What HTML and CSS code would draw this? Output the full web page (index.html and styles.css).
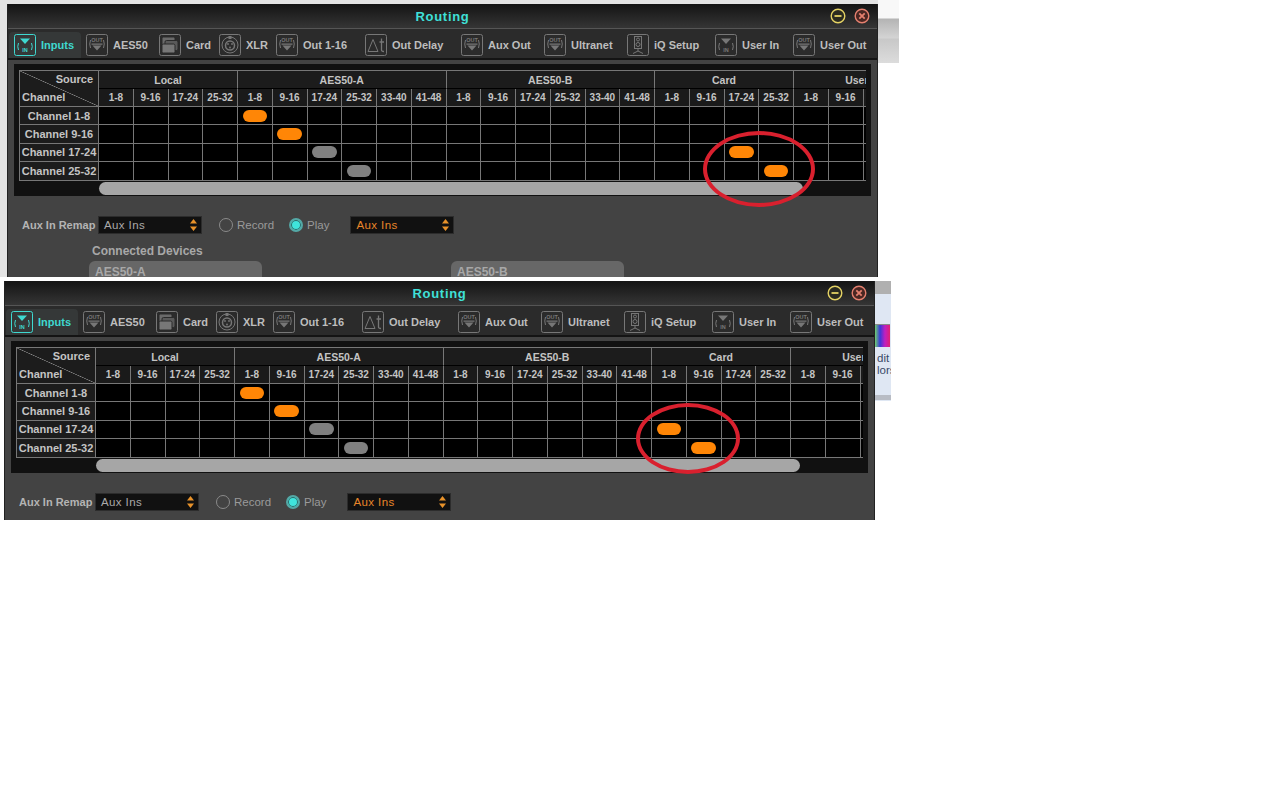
FILE: index.html
```html
<!DOCTYPE html>
<html lang="en">
<head>
    <meta charset="UTF-8">
    <title>Routing</title>
    <link rel="stylesheet" href="styles.css">
</head>
<body>
    <svg class="defs" width="0" height="0">
        <symbol id="ico-in" viewBox="0 0 22 22">
            <rect x="0.5" y="0.5" width="21" height="21" rx="2" fill="none" stroke="currentColor"/>
            <path d="M6 4.5h10l-5 5.5z" fill="currentColor"/>
            <path d="M4.500 9q-1.500 3.500 0 7M17.500 9q1.500 3.500 0 7" fill="none" stroke="currentColor"/>
            <text x="11" y="18" class="ico-text" text-anchor="middle" fill="currentColor">IN</text>
        </symbol>
        <symbol id="ico-out" viewBox="0 0 22 22">
            <rect x="0.500" y="0.500" width="21" height="21" rx="2" fill="none" stroke="currentColor"/>
            <text x="11" y="7.500" class="ico-text" text-anchor="middle" fill="currentColor">OUT</text>
            <path d="M4.500 6q-1.500 4 0 8M17.500 6q1.500 4 0 8" fill="none" stroke="currentColor"/>
            <path d="M5.500 9.500h11v1.200h-11zM6.500 11.500h9l-4.500 5z" fill="currentColor"/>
        </symbol>
        <symbol id="ico-card" viewBox="0 0 22 22">
            <rect x="0.500" y="0.500" width="21" height="21" rx="2" fill="none" stroke="currentColor"/>
            <rect x="3" y="3" width="13" height="10" rx="1.500" fill="#6a6a6a" stroke="#2a2a2a"/>
            <rect x="6" y="6.500" width="13" height="10" rx="1.500" fill="#5a5a5a" stroke="#2a2a2a"/>
            <rect x="3" y="10" width="13" height="9" rx="1.500" fill="#777" stroke="#2a2a2a"/>
        </symbol>
        <symbol id="ico-xlr" viewBox="0 0 22 22">
            <rect x="0.500" y="0.500" width="21" height="21" rx="2" fill="none" stroke="currentColor"/>
            <circle cx="11" cy="11" r="8" fill="none" stroke="currentColor"/>
            <circle cx="11" cy="11.500" r="4.500" fill="none" stroke="currentColor" stroke-width="1.500"/>
            <circle cx="9" cy="10" r="0.900" fill="currentColor"/>
            <circle cx="13" cy="10" r="0.900" fill="currentColor"/>
            <circle cx="11" cy="13.500" r="0.900" fill="currentColor"/>
            <rect x="9.500" y="2" width="3" height="3" fill="currentColor"/>
        </symbol>
        <symbol id="ico-delay" viewBox="0 0 22 22">
            <rect x="0.500" y="0.500" width="21" height="21" rx="2" fill="none" stroke="currentColor"/>
            <path d="M3 17.500l5-12 5 12z" fill="none" stroke="currentColor"/>
            <path d="M16.500 4.500v11.500q0 1.500 2.500 1.500M14.500 8h4.500" fill="none" stroke="currentColor" stroke-width="1.300"/>
        </symbol>
        <symbol id="ico-iq" viewBox="0 0 22 22">
            <rect x="0.500" y="0.500" width="21" height="21" rx="2" fill="none" stroke="currentColor"/>
            <rect x="7.500" y="2.500" width="7" height="12" fill="none" stroke="currentColor"/>
            <circle cx="11" cy="5.500" r="1.500" fill="none" stroke="currentColor"/>
            <circle cx="11" cy="10.500" r="2" fill="none" stroke="currentColor"/>
            <path d="M11 15v2M11 17l-5 2.500M11 17l5 2.500" fill="none" stroke="currentColor"/>
        </symbol>
    </svg>

    <!-- first capture -->
    <div class="shot">
        <div class="backdrop">
            <div class="window window-tall">
                <div class="titlebar">
                    <div class="title">Routing</div>
                    <div class="win-buttons">
                        <svg class="win-btn" viewBox="0 0 16 16"><circle cx="8" cy="8" r="6.800" fill="#2a2a20" stroke="#e4d264" stroke-width="1.400"/><path d="M4.500 8h7" stroke="#e4d264" stroke-width="1.800"/></svg>
                        <svg class="win-btn" viewBox="0 0 16 16"><circle cx="8" cy="8" r="6.800" fill="#4a2622" stroke="#e5806f" stroke-width="1.400"/><path d="M5.300 5.300l5.400 5.400M10.700 5.300l-5.400 5.400" stroke="#e5806f" stroke-width="1.800"/></svg>
                    </div>
                </div>
                <div class="tabs">
                    <div class="tab tab-active"><svg class="ico"><use href="#ico-in"/></svg>Inputs</div>
                    <div class="tab"><svg class="ico"><use href="#ico-out"/></svg>AES50</div>
                    <div class="tab"><svg class="ico"><use href="#ico-card"/></svg>Card</div>
                    <div class="tab"><svg class="ico"><use href="#ico-xlr"/></svg>XLR</div>
                    <div class="tab"><svg class="ico"><use href="#ico-out"/></svg>Out 1-16</div>
                    <div class="tab"><svg class="ico"><use href="#ico-delay"/></svg>Out Delay</div>
                    <div class="tab"><svg class="ico"><use href="#ico-out"/></svg>Aux Out</div>
                    <div class="tab"><svg class="ico"><use href="#ico-out"/></svg>Ultranet</div>
                    <div class="tab"><svg class="ico"><use href="#ico-iq"/></svg>iQ Setup</div>
                    <div class="tab"><svg class="ico"><use href="#ico-in"/></svg>User In</div>
                    <div class="tab"><svg class="ico"><use href="#ico-out"/></svg>User Out</div>
                </div>
                <div class="panel">
                    <div class="matrix-clip">
                        <div class="matrix">
                            <div class="corner"><span class="corner-source">Source</span><span>Channel</span></div>
                            <div class="group g4">Local</div><div class="group g6">AES50-A</div><div class="group g6">AES50-B</div><div class="group g4">Card</div><div class="group g4">User In</div>
                            <div class="sub">1-8</div><div class="sub">9-16</div><div class="sub">17-24</div><div class="sub">25-32</div>
                            <div class="sub">1-8</div><div class="sub">9-16</div><div class="sub">17-24</div><div class="sub">25-32</div><div class="sub">33-40</div><div class="sub">41-48</div>
                            <div class="sub">1-8</div><div class="sub">9-16</div><div class="sub">17-24</div><div class="sub">25-32</div><div class="sub">33-40</div><div class="sub">41-48</div>
                            <div class="sub">1-8</div><div class="sub">9-16</div><div class="sub">17-24</div><div class="sub">25-32</div>
                            <div class="sub">1-8</div><div class="sub">9-16</div><div class="sub">17-24</div><div class="sub">25-32</div>

                            <div class="row-head">Channel 1-8</div>
                            <div class="c"></div><div class="c"></div><div class="c"></div><div class="c"></div><div class="c"><i class="pill"></i></div><div class="c"></div><div class="c"></div><div class="c"></div><div class="c"></div><div class="c"></div><div class="c"></div><div class="c"></div><div class="c"></div><div class="c"></div><div class="c"></div><div class="c"></div><div class="c"></div><div class="c"></div><div class="c"></div><div class="c"></div><div class="c"></div><div class="c"></div><div class="c"></div><div class="c"></div>
                            <div class="row-head">Channel 9-16</div>
                            <div class="c"></div><div class="c"></div><div class="c"></div><div class="c"></div><div class="c"></div><div class="c"><i class="pill"></i></div><div class="c"></div><div class="c"></div><div class="c"></div><div class="c"></div><div class="c"></div><div class="c"></div><div class="c"></div><div class="c"></div><div class="c"></div><div class="c"></div><div class="c"></div><div class="c"></div><div class="c"></div><div class="c"></div><div class="c"></div><div class="c"></div><div class="c"></div><div class="c"></div>
                            <div class="row-head">Channel 17-24</div>
                            <div class="c"></div><div class="c"></div><div class="c"></div><div class="c"></div><div class="c"></div><div class="c"></div><div class="c"><i class="pill pill-off"></i></div><div class="c"></div><div class="c"></div><div class="c"></div><div class="c"></div><div class="c"></div><div class="c"></div><div class="c"></div><div class="c"></div><div class="c"></div><div class="c"></div><div class="c"></div><div class="c"><i class="pill"></i></div><div class="c"></div><div class="c"></div><div class="c"></div><div class="c"></div><div class="c"></div>
                            <div class="row-head">Channel 25-32</div>
                            <div class="c"></div><div class="c"></div><div class="c"></div><div class="c"></div><div class="c"></div><div class="c"></div><div class="c"></div><div class="c"><i class="pill pill-off"></i></div><div class="c"></div><div class="c"></div><div class="c"></div><div class="c"></div><div class="c"></div><div class="c"></div><div class="c"></div><div class="c"></div><div class="c"></div><div class="c"></div><div class="c"></div><div class="c"><i class="pill"></i></div><div class="c"></div><div class="c"></div><div class="c"></div><div class="c"></div>
                        </div>
                    </div>
                    <div class="scrollbar"></div>
                </div>
                <div class="aux-row">
                    <span class="aux-label">Aux In Remap</span>
                    <div class="dropdown">Aux Ins<svg class="updown" viewBox="0 0 7 12"><path d="M3.500 0l3.500 4.500h-7zM3.500 12l-3.500-4.500h7z"/></svg></div>
                    <span class="radio radio-first"></span><span class="radio-label">Record</span>
                    <span class="radio radio-second radio-on"></span><span class="radio-label">Play</span>
                    <div class="dropdown dropdown-orange">Aux Ins<svg class="updown" viewBox="0 0 7 12"><path d="M3.500 0l3.500 4.500h-7zM3.500 12l-3.500-4.500h7z"/></svg></div>
                </div>
                <div class="devices-title">Connected Devices</div>
                <div class="devices">
                    <div class="device">AES50-A</div>
                    <div class="device">AES50-B</div>
                </div>
            </div>
        </div>
        <div class="side side-one"></div>
        <div class="ring ring-one"></div>
    </div>

    <!-- second capture -->
    <div class="shot shot-two">
        <div class="window window-short">
            <div class="titlebar">
                <div class="title">Routing</div>
                <div class="win-buttons">
                    <svg class="win-btn" viewBox="0 0 16 16"><circle cx="8" cy="8" r="6.800" fill="#2a2a20" stroke="#e4d264" stroke-width="1.400"/><path d="M4.500 8h7" stroke="#e4d264" stroke-width="1.800"/></svg>
                    <svg class="win-btn" viewBox="0 0 16 16"><circle cx="8" cy="8" r="6.800" fill="#4a2622" stroke="#e5806f" stroke-width="1.400"/><path d="M5.300 5.300l5.400 5.400M10.700 5.300l-5.400 5.400" stroke="#e5806f" stroke-width="1.800"/></svg>
                </div>
            </div>
            <div class="tabs">
                <div class="tab tab-active"><svg class="ico"><use href="#ico-in"/></svg>Inputs</div>
                <div class="tab"><svg class="ico"><use href="#ico-out"/></svg>AES50</div>
                <div class="tab"><svg class="ico"><use href="#ico-card"/></svg>Card</div>
                <div class="tab"><svg class="ico"><use href="#ico-xlr"/></svg>XLR</div>
                <div class="tab"><svg class="ico"><use href="#ico-out"/></svg>Out 1-16</div>
                <div class="tab"><svg class="ico"><use href="#ico-delay"/></svg>Out Delay</div>
                <div class="tab"><svg class="ico"><use href="#ico-out"/></svg>Aux Out</div>
                <div class="tab"><svg class="ico"><use href="#ico-out"/></svg>Ultranet</div>
                <div class="tab"><svg class="ico"><use href="#ico-iq"/></svg>iQ Setup</div>
                <div class="tab"><svg class="ico"><use href="#ico-in"/></svg>User In</div>
                <div class="tab"><svg class="ico"><use href="#ico-out"/></svg>User Out</div>
            </div>
            <div class="panel">
                <div class="matrix-clip">
                    <div class="matrix">
                        <div class="corner"><span class="corner-source">Source</span><span>Channel</span></div>
                        <div class="group g4">Local</div><div class="group g6">AES50-A</div><div class="group g6">AES50-B</div><div class="group g4">Card</div><div class="group g4">User In</div>
                        <div class="sub">1-8</div><div class="sub">9-16</div><div class="sub">17-24</div><div class="sub">25-32</div>
                        <div class="sub">1-8</div><div class="sub">9-16</div><div class="sub">17-24</div><div class="sub">25-32</div><div class="sub">33-40</div><div class="sub">41-48</div>
                        <div class="sub">1-8</div><div class="sub">9-16</div><div class="sub">17-24</div><div class="sub">25-32</div><div class="sub">33-40</div><div class="sub">41-48</div>
                        <div class="sub">1-8</div><div class="sub">9-16</div><div class="sub">17-24</div><div class="sub">25-32</div>
                        <div class="sub">1-8</div><div class="sub">9-16</div><div class="sub">17-24</div><div class="sub">25-32</div>

                        <div class="row-head">Channel 1-8</div>
                        <div class="c"></div><div class="c"></div><div class="c"></div><div class="c"></div><div class="c"><i class="pill"></i></div><div class="c"></div><div class="c"></div><div class="c"></div><div class="c"></div><div class="c"></div><div class="c"></div><div class="c"></div><div class="c"></div><div class="c"></div><div class="c"></div><div class="c"></div><div class="c"></div><div class="c"></div><div class="c"></div><div class="c"></div><div class="c"></div><div class="c"></div><div class="c"></div><div class="c"></div>
                        <div class="row-head">Channel 9-16</div>
                        <div class="c"></div><div class="c"></div><div class="c"></div><div class="c"></div><div class="c"></div><div class="c"><i class="pill"></i></div><div class="c"></div><div class="c"></div><div class="c"></div><div class="c"></div><div class="c"></div><div class="c"></div><div class="c"></div><div class="c"></div><div class="c"></div><div class="c"></div><div class="c"></div><div class="c"></div><div class="c"></div><div class="c"></div><div class="c"></div><div class="c"></div><div class="c"></div><div class="c"></div>
                        <div class="row-head">Channel 17-24</div>
                        <div class="c"></div><div class="c"></div><div class="c"></div><div class="c"></div><div class="c"></div><div class="c"></div><div class="c"><i class="pill pill-off"></i></div><div class="c"></div><div class="c"></div><div class="c"></div><div class="c"></div><div class="c"></div><div class="c"></div><div class="c"></div><div class="c"></div><div class="c"></div><div class="c"><i class="pill"></i></div><div class="c"></div><div class="c"></div><div class="c"></div><div class="c"></div><div class="c"></div><div class="c"></div><div class="c"></div>
                        <div class="row-head">Channel 25-32</div>
                        <div class="c"></div><div class="c"></div><div class="c"></div><div class="c"></div><div class="c"></div><div class="c"></div><div class="c"></div><div class="c"><i class="pill pill-off"></i></div><div class="c"></div><div class="c"></div><div class="c"></div><div class="c"></div><div class="c"></div><div class="c"></div><div class="c"></div><div class="c"></div><div class="c"></div><div class="c"><i class="pill"></i></div><div class="c"></div><div class="c"></div><div class="c"></div><div class="c"></div><div class="c"></div><div class="c"></div>
                    </div>
                </div>
                <div class="scrollbar"></div>
            </div>
            <div class="aux-row">
                <span class="aux-label">Aux In Remap</span>
                <div class="dropdown">Aux Ins<svg class="updown" viewBox="0 0 7 12"><path d="M3.500 0l3.500 4.500h-7zM3.500 12l-3.500-4.500h7z"/></svg></div>
                <span class="radio radio-first"></span><span class="radio-label">Record</span>
                <span class="radio radio-second radio-on"></span><span class="radio-label">Play</span>
                <div class="dropdown dropdown-orange">Aux Ins<svg class="updown" viewBox="0 0 7 12"><path d="M3.500 0l3.500 4.500h-7zM3.500 12l-3.500-4.500h7z"/></svg></div>
            </div>
        </div>
        <div class="side side-two">
            <div class="side-gray"></div>
            <div class="side-swatch"></div>
            <div class="side-text">dit<br>lors</div>
            <div class="side-foot"></div>
        </div>
        <div class="ring ring-two"></div>
    </div>
</body>
</html>
```

FILE: styles.css
```css
body {
    margin: 0;
    background: #fff;
    font-family: "Liberation Sans", Arial, sans-serif;
}

.defs {
    position: absolute;
}

.ico-text {
    font-family: "Liberation Sans", Arial, sans-serif;
    font-size: 5.5px;
}

.shot {
    position: relative;
    display: flex;
    align-items: flex-start;
    height: 277px;
}

.shot-two {
    height: 239px;
    margin-top: 4px;
    margin-left: 4px;
}

.backdrop {
    width: 871px;
    padding: 4px 0 0 7px;
    background: #e4e4e4;
}

.window {
    box-sizing: border-box;
    width: 871px;
    flex: none;
    overflow: hidden;
    background: #434343;
    border: solid #222;
    border-width: 0 1px;
}

.window-tall {
    height: 273px;
}

.window-short {
    height: 239px;
}

/* title bar */
.titlebar {
    position: relative;
    height: 24px;
    background: linear-gradient(#141414, #353535);
    display: flex;
    justify-content: center;
    align-items: center;
}

.title {
    color: #3fe0d8;
    font-size: 13px;
    font-weight: bold;
    letter-spacing: 0.7px;
}

.win-buttons {
    position: absolute;
    right: 7px;
    top: 4px;
    display: flex;
    gap: 8px;
}

.win-btn {
    width: 16px;
    height: 16px;
}

/* tabs */
.tabs {
    box-sizing: border-box;
    height: 32px;
    padding: 3px 0 0 1px;
    display: grid;
    grid-template-columns: 72px 73px 60px 57px 89px 96px 83px 83px 88px 78px 1fr;
    background: #2b2b2b;
    border-top: 1px solid #555;
    border-bottom: 2px solid #141414;
}

.tab {
    display: flex;
    align-items: center;
    gap: 5px;
    padding-left: 5px;
    color: #bdbdbd;
    font-size: 11px;
    font-weight: bold;
    white-space: nowrap;
}

.tab-active {
    color: #3fd8d0;
    background: #353838;
    border-radius: 4px 4px 0 0;
}

.ico {
    width: 22px;
    height: 22px;
    flex: none;
    color: #777;
}

.tab-active .ico {
    color: #3fd8d0;
}

/* routing matrix */
.panel {
    margin: 4px 6px 0;
    padding: 6px 5px 1px;
    background: #111;
}

.matrix-clip {
    width: 847px;
    overflow: hidden;
}

.matrix {
    display: grid;
    grid-template-columns: 80px repeat(24, 34.75px);
    grid-template-rows: 18px 18px repeat(4, 18.4px);
    width: 914px;
    border-top: 1px solid #777;
    color: #c4c4c4;
    font-weight: bold;
}

.matrix > div {
    box-sizing: border-box;
    border-right: 1px solid #777;
    border-bottom: 1px solid #777;
    display: flex;
    align-items: center;
    justify-content: center;
}

.matrix > .corner {
    grid-row: span 2;
    flex-direction: column;
    align-items: stretch;
    justify-content: space-between;
    padding: 2px 5px 3px 2px;
    border-left: 1px solid #777;
    font-size: 11px;
    background: linear-gradient(to top right, #1c1c1c calc(50% - 0.6px), #888 50%, #1c1c1c calc(50% + 0.6px));
}

.corner-source {
    text-align: right;
}

.matrix > .group {
    font-size: 10.5px;
    background: #1c1c1c;
    border-bottom-color: #000;
}

.g4 {
    grid-column: span 4;
}

.g6 {
    grid-column: span 6;
}

.matrix > .sub {
    font-size: 10px;
    background: #1a1a1a;
}

.matrix > .row-head {
    font-size: 11px;
    white-space: nowrap;
    background: #1c1c1c;
    border-left: 1px solid #777;
}

.c {
    background: #000;
}

.pill {
    display: block;
    width: 24.5px;
    height: 12px;
    border-radius: 6px;
    background: #ff8606;
}

.pill-off {
    background: #808080;
}

.scrollbar {
    width: 704px;
    height: 13px;
    margin: 1.4px 0 0 80px;
    border-radius: 7px;
    background: #a6a6a6;
}

/* aux remap row */
.aux-row {
    display: flex;
    align-items: center;
    height: 18px;
    margin-top: 20px;
    padding-left: 14px;
}

.aux-label {
    width: 76px;
    color: #b4b4b4;
    font-size: 11px;
    font-weight: bold;
}

.dropdown {
    box-sizing: border-box;
    width: 104px;
    height: 18px;
    padding: 0 4px 0 5px;
    display: flex;
    align-items: center;
    justify-content: space-between;
    background: #111;
    border: 1px solid #2c2c2c;
    color: #aaa;
    font-size: 11.5px;
    letter-spacing: 0.4px;
}

.dropdown-orange {
    margin-left: 21px;
    color: #e8862a;
}

.updown {
    width: 7px;
    height: 12px;
    fill: #e8922a;
}

.radio {
    box-sizing: border-box;
    width: 14px;
    height: 14px;
    border-radius: 50%;
    border: 1px solid #8a8a8a;
}

.radio-first {
    margin-left: 17px;
}

.radio-second {
    margin-left: 15px;
}

.radio-on {
    border: 2px solid #54a8a6;
    background: #3fe4dc;
    box-shadow: inset 0 0 0 1px #2a6664;
}

.radio-label {
    margin-left: 4px;
    color: #9a9a9a;
    font-size: 11.5px;
}

/* connected devices, cut off by the capture */
.devices-title {
    margin: 10px 0 0 84px;
    color: #a8a8a8;
    font-size: 12px;
    font-weight: bold;
    line-height: 14px;
}

.devices {
    display: flex;
    gap: 189px;
    margin: 3px 0 0 81px;
}

.device {
    box-sizing: border-box;
    width: 173px;
    height: 60px;
    padding: 4px 6px;
    border-radius: 6px 6px 0 0;
    background: #676767;
    color: #a8a8a8;
    font-size: 12px;
    font-weight: bold;
}

/* what shows of the desktop beside the windows */
.side {
    flex: none;
}

.side-one {
    width: 21px;
    height: 63px;
    background: linear-gradient(#f8f8f8 0, #f8f8f8 18px, #b4b4b4 19px, #d4d4d4 38px, #c8c8c8 39px, #dcdcdc 63px);
}

.side-two {
    width: 16px;
    height: 120px;
    overflow: hidden;
    background: #dfe7f3;
}

.side-gray {
    height: 13px;
    background: #b0b0b0;
}

.side-swatch {
    height: 22px;
    margin: 30px 1px 0 0;
    background: linear-gradient(to right, #6fd06f, #3a38d8, #c020c0, #e02070);
    border-top: 1px solid #888;
}

.side-text {
    margin-top: 5px;
    padding-left: 2px;
    height: 40px;
    color: #3a4a68;
    font-size: 11.5px;
    line-height: 12px;
}

.side-foot {
    height: 5px;
    margin-top: 3px;
    background: #b8bcc4;
}

/* red marker rings painted over the capture */
.ring {
    position: absolute;
    box-sizing: border-box;
    border: 4px solid #d9202e;
    border-radius: 50%;
}

.ring-one {
    left: 703px;
    top: 131px;
    width: 112px;
    height: 76px;
}

.ring-two {
    left: 632px;
    top: 122px;
    width: 104px;
    height: 71px;
}
```
